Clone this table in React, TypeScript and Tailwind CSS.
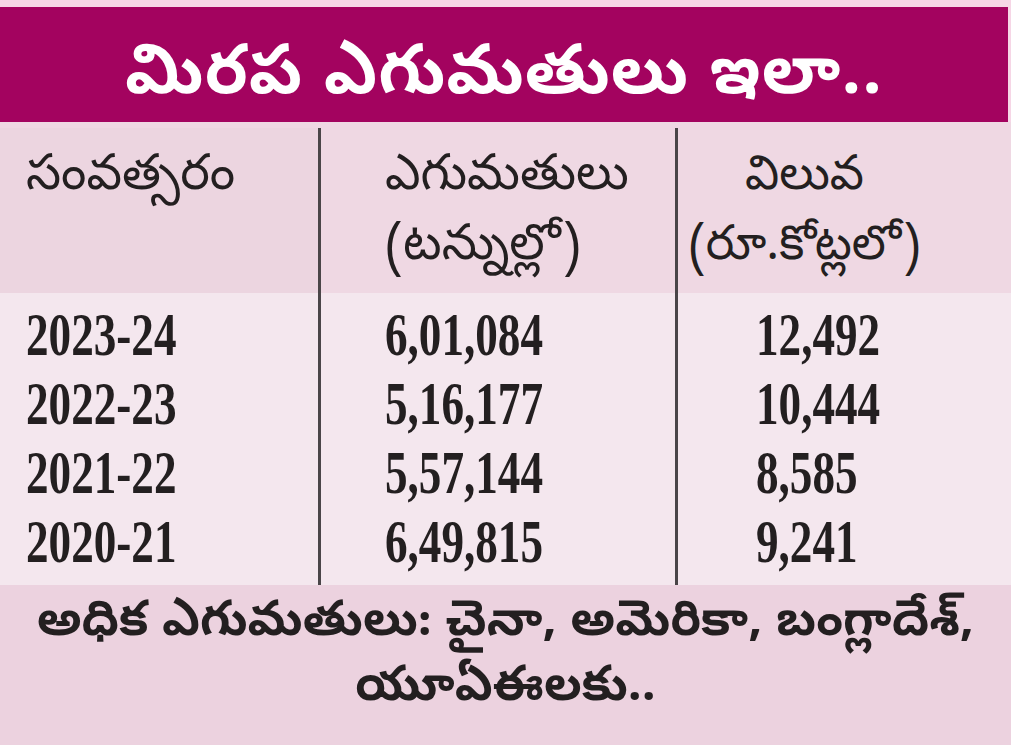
import React from "react";

const te = { fontFamily: '"Noto Sans Telugu", "Noto Sans", "Lato", sans-serif' };
const num = { fontFamily: '"Liberation Serif", "DejaVu Serif", serif' };

const rows = [
  ["2023-24", "6,01,084", "12,492"],
  ["2022-23", "5,16,177", "10,444"],
  ["2021-22", "5,57,144", "8,585"],
  ["2020-21", "6,49,815", "9,241"],
];

function N({ children }: { children: React.ReactNode }) {
  return (
    <span className="inline-block origin-left scale-x-[0.74] whitespace-nowrap font-bold" style={num}>
      {children}
    </span>
  );
}

export default function App() {
  return (
    <div className="w-[1011px] h-[745px] overflow-hidden bg-[#f6d6e6] flex flex-col">
      <div className="h-[7px] shrink-0" />
      <div className="h-[115px] shrink-0 mr-[3px] bg-[#a3035f] flex items-center justify-center pt-[30px]">
        <span className="text-white font-bold text-[69px] leading-none tracking-[1px]" style={te}>
          మిరప ఎగుమతులు ఇలా..
        </span>
      </div>
      <div className="flex-1 grid grid-cols-[318px_357px_1fr] grid-rows-[6px_165px_292px_1fr]">
        <div className="col-span-3 bg-[#efd8e3]" />
        {/* header */}
        <div className="bg-[#ecd5e0] pl-[26px] pt-[17px] text-[#231f20] text-[50px] leading-[70px]" style={te}>
          సంవత్సరం
        </div>
        <div className="bg-[#efd8e3] border-l-[3px] border-[#4a4548] pl-[64px] pt-[17px] text-[#231f20] text-[50px] leading-[70px]" style={te}>
          <div>ఎగుమతులు</div>
          <div>(టన్నుల్లో)</div>
        </div>
        <div className="bg-[#efd8e3] border-l-[3px] border-[#4a4548] pt-[17px] text-center pr-[80px] text-[#231f20] text-[48px] leading-[70px]" style={te}>
          <div>విలువ</div>
          <div className="whitespace-nowrap">(రూ.కోట్లలో)</div>
        </div>
        {/* data */}
        <div className="bg-[#f4e7ee] pl-[26px] pt-[4px] flex flex-col text-[#231f20] text-[61px] leading-[69px]">
          {rows.map((r) => (
            <div key={r[0]} className="h-[69px]"><N>{r[0]}</N></div>
          ))}
        </div>
        <div className="bg-[#f4e7ee] border-l-[3px] border-[#4a4548] pl-[64px] pt-[4px] flex flex-col text-[#231f20] text-[61px] leading-[69px]">
          {rows.map((r) => (
            <div key={r[0]} className="h-[69px]"><N>{r[1]}</N></div>
          ))}
        </div>
        <div className="bg-[#f4e7ee] border-l-[3px] border-[#4a4548] pl-[78px] pt-[4px] flex flex-col text-[#231f20] text-[61px] leading-[69px]">
          {rows.map((r) => (
            <div key={r[0]} className="h-[69px]"><N>{r[2]}</N></div>
          ))}
        </div>
        {/* footer */}
        <div className="col-span-3 bg-[#ecd2df] flex flex-col items-center pt-[8px] text-[#231f20] text-[49px] leading-[65px] font-bold" style={te}>
          <div className="whitespace-nowrap">అధిక ఎగుమతులు: చైనా, అమెరికా, బంగ్లాదేశ్,</div>
          <div>యూఏఈలకు..</div>
        </div>
      </div>
    </div>
  );
}
